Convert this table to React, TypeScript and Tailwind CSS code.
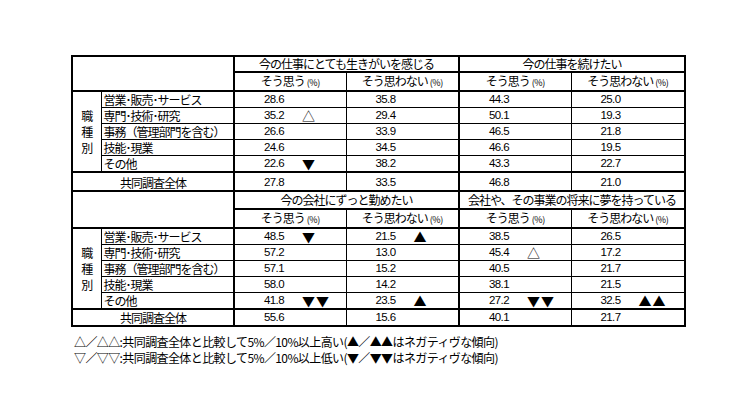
import React from 'react';

type Cell = { v: string; m?: string };
type Row = { label: string; cells: Cell[] };

const jp = { fontFamily: '"Noto Sans CJK JP", "Noto Sans", sans-serif' };
const num = { fontFamily: '"Liberation Sans", Arial, sans-serif' };

const labels = ['営業･販売･サービス', '専門･技術･研究', '事務（管理部門を含む）', '技能･現業', 'その他'];

const section1: Row[] = [
  { label: labels[0], cells: [{ v: '28.6' }, { v: '35.8' }, { v: '44.3' }, { v: '25.0' }] },
  { label: labels[1], cells: [{ v: '35.2', m: '△' }, { v: '29.4' }, { v: '50.1' }, { v: '19.3' }] },
  { label: labels[2], cells: [{ v: '26.6' }, { v: '33.9' }, { v: '46.5' }, { v: '21.8' }] },
  { label: labels[3], cells: [{ v: '24.6' }, { v: '34.5' }, { v: '46.6' }, { v: '19.5' }] },
  { label: labels[4], cells: [{ v: '22.6', m: '▼' }, { v: '38.2' }, { v: '43.3' }, { v: '22.7' }] },
];
const total1: Cell[] = [{ v: '27.8' }, { v: '33.5' }, { v: '46.8' }, { v: '21.0' }];

const section2: Row[] = [
  { label: labels[0], cells: [{ v: '48.5', m: '▼' }, { v: '21.5', m: '▲' }, { v: '38.5' }, { v: '26.5' }] },
  { label: labels[1], cells: [{ v: '57.2' }, { v: '13.0' }, { v: '45.4', m: '△' }, { v: '17.2' }] },
  { label: labels[2], cells: [{ v: '57.1' }, { v: '15.2' }, { v: '40.5' }, { v: '21.7' }] },
  { label: labels[3], cells: [{ v: '58.0' }, { v: '14.2' }, { v: '38.1' }, { v: '21.5' }] },
  { label: labels[4], cells: [{ v: '41.8', m: '▼▼' }, { v: '23.5', m: '▲' }, { v: '27.2', m: '▼▼' }, { v: '32.5', m: '▲▲' }] },
];
const total2: Cell[] = [{ v: '55.6' }, { v: '15.6' }, { v: '40.1' }, { v: '21.7' }];

// 列ごとの左罫線: 1列目と3列目は太線
const leftBorder = ['border-l-2', 'border-l', 'border-l-2', 'border-l'];

function ValueCell({ c, i, extra }: { c: Cell; i: number; extra: string }) {
  return (
    <td className={`border border-black ${leftBorder[i]} ${extra} p-0 align-bottom`}>
      <div className="flex items-end pl-[29px] leading-[15px]">
        <span className="inline-block w-[38px] text-[11.5px] tracking-[-0.6px]" style={num}>
          {c.v}
        </span>
        {c.m && (
          <span className="text-[13px] leading-[15px] tracking-[1px]" style={jp}>
            {c.m}
          </span>
        )}
      </div>
    </td>
  );
}

function Pct({ text }: { text: string }) {
  return (
    <span>
      {text}
      <span className="ml-[2px] text-[9px] tracking-[-0.5px]">(%)</span>
    </span>
  );
}

function Section({
  titles,
  rows,
  total,
  h1,
  h2,
  totalH,
}: {
  titles: [string, string];
  rows: Row[];
  total: Cell[];
  h1: string;
  h2: string;
  totalH: string;
}) {
  return (
    <>
      <tr className={h1}>
        <td colSpan={2} rowSpan={2} className="border-2 border-black p-0" />
        <td colSpan={2} className="border border-black border-l-2 border-t-2 border-b-2 p-0 text-center leading-[14px]">
          <span className="whitespace-nowrap">{titles[0]}</span>
        </td>
        <td colSpan={2} className="border border-black border-l-2 border-t-2 border-b-2 border-r-2 p-0 text-center leading-[14px]">
          <span className="whitespace-nowrap">{titles[1]}</span>
        </td>
      </tr>
      <tr className={h2}>
        {['そう思う', 'そう思わない', 'そう思う', 'そう思わない'].map((t, i) => (
          <td
            key={i}
            className={`border border-black ${leftBorder[i]} border-b-2 ${i === 3 ? 'border-r-2' : ''} p-0 text-center leading-[14px]`}
          >
            <Pct text={t} />
          </td>
        ))}
      </tr>
      {rows.map((r, ri) => (
        <tr key={ri} className="h-[16px]">
          {ri === 0 && (
            <td rowSpan={rows.length} className="border border-black border-l-2 border-t-2 p-0 text-center align-middle">
              <div className="flex flex-col items-center leading-[16px]">
                <span>職</span>
                <span>種</span>
                <span>別</span>
              </div>
            </td>
          )}
          <td className="border border-black p-0 pl-[2px] align-bottom leading-[15px] whitespace-nowrap">{r.label}</td>
          {r.cells.map((c, i) => (
            <ValueCell key={i} c={c} i={i} extra={i === 3 ? 'border-r-2' : ''} />
          ))}
        </tr>
      ))}
      <tr className={totalH}>
        <td colSpan={2} className="border-2 border-black p-0 align-bottom text-center leading-[15px]">
          共同調査全体
        </td>
        {total.map((c, i) => (
          <ValueCell key={i} c={c} i={i} extra={`border-t-2 border-b-2 ${i === 3 ? 'border-r-2' : ''}`} />
        ))}
      </tr>
    </>
  );
}

export default function App() {
  return (
    <div className="min-h-[402px] w-[756px] bg-white pl-[71px] pt-[55px] text-black">
      <table
        className="table-fixed border-collapse text-[12px] tracking-[-1px]"
        style={jp}
      >
        <colgroup>
          <col className="w-[29px]" />
          <col className="w-[133px]" />
          <col className="w-[112px]" />
          <col className="w-[113px]" />
          <col className="w-[112px]" />
          <col className="w-[114px]" />
        </colgroup>
        <tbody>
          <Section
            titles={['今の仕事にとても生きがいを感じる', '今の仕事を続けたい']}
            rows={section1}
            total={total1}
            h1="h-[15px]"
            h2="h-[19px]"
            totalH="h-[19px]"
          />
          <Section
            titles={['今の会社にずっと勤めたい', '会社や、その事業の将来に夢を持っている']}
            rows={section2}
            total={total2}
            h1="h-[18px]"
            h2="h-[19px]"
            totalH="h-[16px]"
          />
        </tbody>
      </table>
      <div className="mt-[7px] ml-[3px] text-[12px] leading-[16px] tracking-[-0.6px]" style={jp}>
        <p>△／△△:共同調査全体と比較して5%／10%以上高い(▲／▲▲はネガティヴな傾向)</p>
        <p>▽／▽▽:共同調査全体と比較して5%／10%以上低い(▼／▼▼はネガティヴな傾向)</p>
      </div>
    </div>
  );
}
